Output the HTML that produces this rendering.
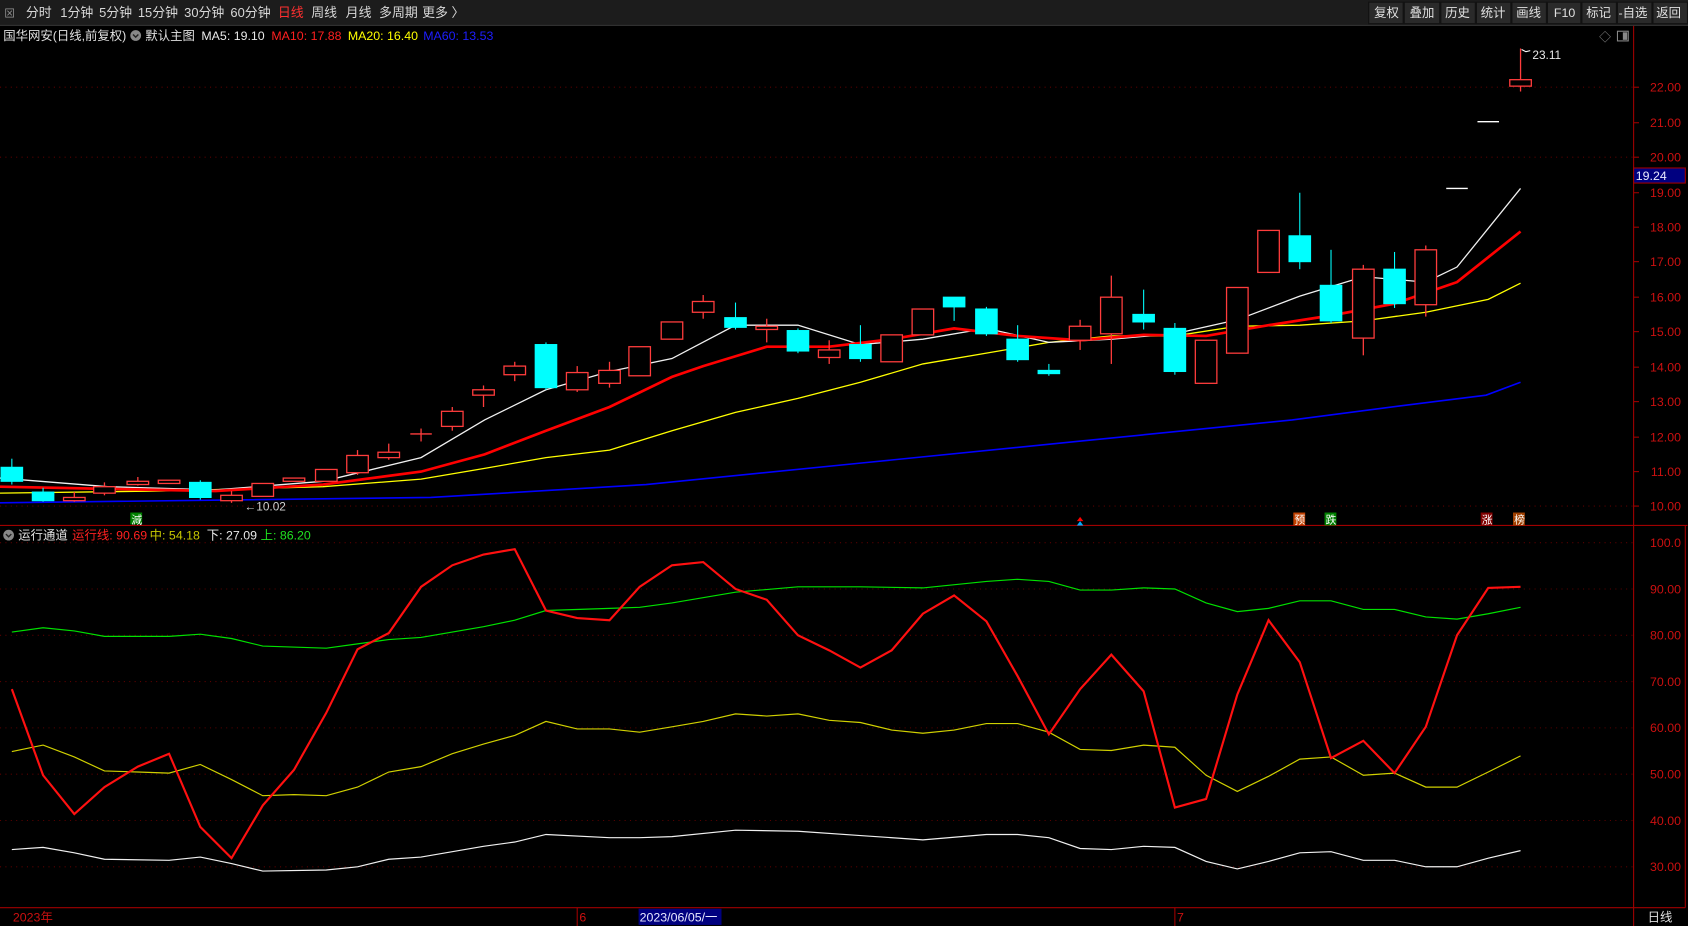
<!DOCTYPE html>
<html><head><meta charset="utf-8"><style>
html,body{margin:0;padding:0;background:#000;overflow:hidden}
svg{display:block}
text{font-family:"Liberation Sans","Noto Sans CJK SC",sans-serif}
</style></head><body>
<svg width="1688" height="926" viewBox="0 0 1567.5 860" preserveAspectRatio="none" xmlns="http://www.w3.org/2000/svg">
<rect width="1567.5" height="860" fill="#000"/>
<!-- toolbar -->
<rect x="0" y="0" width="1567.5" height="23" fill="#1c1c1c"/>
<rect x="0" y="23" width="1567.5" height="1" fill="#3a3a3a"/>
<g font-size="12" fill="#d8d8d8">
<text x="4" y="16" font-size="10" fill="#999">⊠</text>
<text x="24" y="16">分时</text><text x="56" y="16">1分钟</text><text x="92" y="16">5分钟</text><text x="128" y="16">15分钟</text><text x="171" y="16">30分钟</text><text x="214" y="16">60分钟</text>
<text x="258" y="16" fill="#ff3030">日线</text><text x="289" y="16">周线</text><text x="321" y="16">月线</text><text x="352" y="16">多周期</text><text x="392" y="16">更多 〉</text>
</g>
<g fill="#2a2a2a" stroke="#111"><rect x="1271" y="2" width="32" height="20"/><rect x="1304" y="2" width="33" height="20"/><rect x="1338" y="2" width="32" height="20"/><rect x="1371" y="2" width="32" height="20"/><rect x="1404" y="2" width="32" height="20"/><rect x="1437" y="2" width="31" height="20"/><rect x="1469" y="2" width="32" height="20"/><rect x="1502" y="2" width="32" height="20"/><rect x="1535" y="2" width="32" height="20"/></g>
<g font-size="11.5" fill="#e0e0e0"><text x="1276" y="16">复权</text><text x="1309" y="16">叠加</text><text x="1342" y="16">历史</text><text x="1375" y="16">统计</text><text x="1408" y="16">画线</text><text x="1443" y="16">F10</text><text x="1473" y="16">标记</text><text x="1503" y="16">-自选</text><text x="1538" y="16">返回</text></g>
<!-- info line -->
<g font-size="11.5"><text x="3" y="37" fill="#e0e0e0">国华网安(日线,前复权)</text>
<circle cx="126" cy="33" r="5" fill="#888"/><path d="M123.5 32l2.5 2.5 2.5-2.5" stroke="#222" fill="none" stroke-width="1.3"/>
<text x="135" y="37" fill="#e0e0e0">默认主图</text><text x="187" y="37" fill="#e8e8e8">MA5: 19.10</text><text x="252" y="37" fill="#ff2020">MA10: 17.88</text><text x="323" y="37" fill="#ffff00">MA20: 16.40</text><text x="393" y="37" fill="#1e1eff">MA60: 13.53</text></g>
<text x="1485" y="38" font-size="11" fill="#888">◇</text><rect x="1502" y="29" width="10" height="9" fill="none" stroke="#888"/><rect x="1507" y="30" width="4" height="7" fill="#888"/>
<!-- grid main -->
<g stroke="#5a0000" stroke-dasharray="1,4"><line x1="0" x2="1517" y1="81" y2="81"/><line x1="0" x2="1517" y1="146" y2="146"/><line x1="0" x2="1517" y1="470" y2="470"/>
<line x1="0" x2="1517" y1="504" y2="504"/><line x1="0" x2="1517" y1="547" y2="547"/><line x1="0" x2="1517" y1="590" y2="590"/><line x1="0" x2="1517" y1="633" y2="633"/><line x1="0" x2="1517" y1="676" y2="676"/><line x1="0" x2="1517" y1="719" y2="719"/><line x1="0" x2="1517" y1="762" y2="762"/><line x1="0" x2="1517" y1="805" y2="805"/></g>
<!-- axes -->
<g stroke="#a00000" fill="none"><line x1="1517" y1="24" x2="1517" y2="860"/><line x1="1565" y1="488" x2="1565" y2="843"/><line x1="0" y1="488" x2="1567" y2="488"/><line x1="0" y1="843" x2="1565" y2="843"/></g>
<g font-size="11.5" fill="#cc1010" text-anchor="end">
<text x="1561" y="85">22.00</text><text x="1561" y="118">21.00</text><text x="1561" y="150">20.00</text><text x="1561" y="183">19.00</text><text x="1561" y="215">18.00</text><text x="1561" y="247">17.00</text><text x="1561" y="280">16.00</text><text x="1561" y="312">15.00</text><text x="1561" y="345">14.00</text><text x="1561" y="377">13.00</text><text x="1561" y="410">12.00</text><text x="1561" y="442">11.00</text><text x="1561" y="474">10.00</text>
<text x="1561" y="508">100.0</text><text x="1561" y="551">90.00</text><text x="1561" y="594">80.00</text><text x="1561" y="637">70.00</text><text x="1561" y="680">60.00</text><text x="1561" y="723">50.00</text><text x="1561" y="766">40.00</text><text x="1561" y="809">30.00</text></g>
<g stroke="#a00000"><line x1="1517" x2="1522" y1="81" y2="81"/><line x1="1517" x2="1522" y1="114" y2="114"/><line x1="1517" x2="1522" y1="146" y2="146"/><line x1="1517" x2="1522" y1="179" y2="179"/><line x1="1517" x2="1522" y1="211" y2="211"/><line x1="1517" x2="1522" y1="243" y2="243"/><line x1="1517" x2="1522" y1="276" y2="276"/><line x1="1517" x2="1522" y1="308" y2="308"/><line x1="1517" x2="1522" y1="341" y2="341"/><line x1="1517" x2="1522" y1="373" y2="373"/><line x1="1517" x2="1522" y1="406" y2="406"/><line x1="1517" x2="1522" y1="438" y2="438"/><line x1="1517" x2="1522" y1="470" y2="470"/></g>
<rect x="1517" y="156" width="48" height="14" fill="#000080" stroke="#a00000"/><text x="1519" y="167" font-size="11.5" fill="#e8e8ff">19.24</text>
<!-- MA lines -->
<polyline fill="none" stroke="#0000ff" stroke-width="1.5" points="0,467 400,462 600,450 800,430 1000,410 1100,400 1200,390 1300,377 1380,367 1412,355"/>
<polyline fill="none" stroke="#ffff00" stroke-width="1.2" points="0,458 150,456 300,452 391,445 450,435 507,425 566,418 624,400 683,383 741,370 799,355 857,338 916,328 974,318 1032,312 1091,312 1149,303 1207,302 1266,298 1324,290 1382,278 1412,263"/>
<polyline fill="none" stroke="#f0f0f0" stroke-width="1.2" points="0,444 100,452 200,455 300,447 391,425 450,390 507,362 566,345 624,333 683,302 741,302 799,320 857,315 916,305 974,318 1032,315 1091,310 1149,297 1207,275 1266,257 1324,262 1353,248 1412,175"/>
<polyline fill="none" stroke="#ff0000" stroke-width="2.5" points="0,452 100,454 200,456 300,450 391,438 450,422 507,400 566,378 624,350 653,340 712,322 770,322 828,315 886,305 945,312 1003,316 1062,311 1120,312 1178,302 1236,293 1295,282 1353,262 1412,215"/>
<!-- candles -->
<g stroke="#ff3c3c" fill="#000" stroke-width="1.2">
<line x1="69" y1="457" x2="69" y2="466"/><rect x="59" y="462" width="20" height="3"/>
<line x1="97" y1="448" x2="97" y2="460"/><rect x="87" y="452" width="20" height="6"/>
<line x1="128" y1="443" x2="128" y2="451"/><rect x="118" y="447" width="20" height="3"/>
<rect x="147" y="446" width="20" height="3"/>
<line x1="215" y1="456" x2="215" y2="467"/><rect x="205" y="460" width="20" height="5"/>
<rect x="234" y="449" width="20" height="12"/>
<rect x="263" y="444" width="20" height="3"/>
<rect x="293" y="436" width="20" height="11"/>
<line x1="332" y1="418" x2="332" y2="441"/><rect x="322" y="423" width="20" height="16"/>
<line x1="361" y1="412" x2="361" y2="427"/><rect x="351" y="420" width="20" height="5"/>
<line x1="391" y1="398" x2="391" y2="410"/><line x1="381" y1="403" x2="401" y2="403"/>
<line x1="420" y1="378" x2="420" y2="400"/><rect x="410" y="382" width="20" height="14"/>
<line x1="449" y1="358" x2="449" y2="378"/><rect x="439" y="362" width="20" height="5"/>
<line x1="478" y1="336" x2="478" y2="354"/><rect x="468" y="340" width="20" height="8"/>
<line x1="536" y1="340" x2="536" y2="364"/><rect x="526" y="346" width="20" height="16"/>
<line x1="566" y1="336" x2="566" y2="360"/><rect x="556" y="344" width="20" height="12"/>
<rect x="584" y="322" width="20" height="27"/>
<rect x="614" y="299" width="20" height="16"/>
<line x1="653" y1="274" x2="653" y2="296"/><rect x="643" y="280" width="20" height="10"/>
<line x1="712" y1="296" x2="712" y2="318"/><rect x="702" y="303" width="20" height="3"/>
<line x1="770" y1="316" x2="770" y2="338"/><rect x="760" y="325" width="20" height="7"/>
<rect x="818" y="311" width="20" height="25"/>
<rect x="847" y="287" width="20" height="24"/>
<line x1="1003" y1="297" x2="1003" y2="325"/><rect x="993" y="303" width="20" height="13"/>
<line x1="1032" y1="256" x2="1032" y2="338"/><rect x="1022" y="276" width="20" height="34"/>
<rect x="1110" y="316" width="20" height="40"/>
<rect x="1139" y="267" width="20" height="61"/>
<rect x="1168" y="214" width="20" height="39"/>
<line x1="1266" y1="246" x2="1266" y2="330"/><rect x="1256" y="250" width="20" height="64"/>
<line x1="1324" y1="228" x2="1324" y2="294"/><rect x="1314" y="232" width="20" height="51"/>
<line x1="1343" y1="175" x2="1363" y2="175" stroke="#fff"/><line x1="1372" y1="113" x2="1392" y2="113" stroke="#fff"/>
<line x1="1412" y1="45" x2="1412" y2="85"/><rect x="1402" y="74" width="20" height="6"/>
</g>
<g fill="#00ffff" stroke="#00ffff">
<line x1="11" y1="426" x2="11" y2="450"/><rect x="1" y="434" width="20" height="13"/>
<line x1="40" y1="453" x2="40" y2="466"/><rect x="30" y="457" width="20" height="8"/>
<line x1="186" y1="446" x2="186" y2="464"/><rect x="176" y="448" width="20" height="14"/>
<line x1="507" y1="318" x2="507" y2="362"/><rect x="497" y="320" width="20" height="40"/>
<line x1="683" y1="281" x2="683" y2="306"/><rect x="673" y="295" width="20" height="9"/>
<line x1="741" y1="305" x2="741" y2="328"/><rect x="731" y="307" width="20" height="19"/>
<line x1="799" y1="302" x2="799" y2="336"/><rect x="789" y="320" width="20" height="13"/>
<line x1="886" y1="276" x2="886" y2="298"/><rect x="876" y="276" width="20" height="9"/>
<line x1="916" y1="285" x2="916" y2="312"/><rect x="906" y="287" width="20" height="23"/>
<line x1="945" y1="302" x2="945" y2="336"/><rect x="935" y="315" width="20" height="19"/>
<line x1="974" y1="338" x2="974" y2="349"/><rect x="964" y="344" width="20" height="3"/>
<line x1="1062" y1="269" x2="1062" y2="306"/><rect x="1052" y="292" width="20" height="7"/>
<line x1="1091" y1="300" x2="1091" y2="348"/><rect x="1081" y="305" width="20" height="40"/>
<line x1="1207" y1="179" x2="1207" y2="250"/><rect x="1197" y="219" width="20" height="24"/>
<line x1="1236" y1="232" x2="1236" y2="300"/><rect x="1226" y="265" width="20" height="33"/>
<line x1="1295" y1="234" x2="1295" y2="286"/><rect x="1285" y="250" width="20" height="32"/>
</g>
<text x="227" y="474" font-size="11" fill="#d0d0d0">←10.02</text>
<path d="M1413 46l4 2 4-1" stroke="#fff" fill="none"/><text x="1423" y="55" font-size="11" fill="#e8e8e8">23.11</text>
<!-- markers -->
<rect x="121" y="476" width="11" height="11" fill="#008000"/><text x="122" y="486" font-size="10" fill="#fff">減</text>
<path d="M1003 480l3 4h-6z" fill="#f00"/><path d="M1003 484l3 4h-6z" fill="#0af"/>
<rect x="1201" y="476" width="11" height="12" fill="#c04000"/><text x="1202" y="486" font-size="10" fill="#fff">预</text>
<rect x="1230" y="476" width="11" height="12" fill="#008000"/><text x="1231" y="486" font-size="10" fill="#fff">跌</text>
<rect x="1375" y="476" width="11" height="12" fill="#800000"/><text x="1376" y="486" font-size="10" fill="#fff">涨</text>
<rect x="1405" y="476" width="11" height="12" fill="#a04000"/><text x="1406" y="486" font-size="10" fill="#fff">榜</text>
<!-- indicator title -->
<circle cx="8" cy="497" r="5" fill="#888"/><path d="M5.5 496l2.5 2.5 2.5-2.5" stroke="#222" fill="none" stroke-width="1.3"/>
<g font-size="11.5"><text x="17" y="501" fill="#e0e0e0">运行通道</text><text x="67" y="501" fill="#ff2020">运行线: 90.69</text><text x="139" y="501" fill="#c8c800">中: 54.18</text><text x="192" y="501" fill="#e8e8e8">下: 27.09</text><text x="242" y="501" fill="#20e020">上: 86.20</text></g>
<!-- indicator lines -->
<polyline fill="none" stroke="#00e000" stroke-width="1.1" points="11,587 40,583 69,586 97,591 157,591 186,589 215,593 244,600 303,602 332,598 361,594 391,592 449,582 478,576 507,567 566,565 594,564 624,560 683,550 741,545 799,545 857,546 916,540 945,538 974,540 1003,548 1032,548 1062,546 1091,547 1120,560 1149,568 1178,565 1207,558 1236,558 1266,566 1295,566 1324,573 1353,575 1382,570 1412,564"/>
<polyline fill="none" stroke="#d0d000" stroke-width="1.1" points="11,698 40,692 69,703 97,716 128,717 157,718 186,710 215,724 244,739 273,738 303,739 332,731 361,717 391,712 420,700 449,691 478,683 507,670 536,677 566,677 594,680 624,675 653,670 683,663 712,665 741,663 770,669 799,671 828,678 857,681 886,678 916,672 945,672 974,680 1003,696 1032,697 1062,692 1091,694 1120,720 1149,735 1178,721 1207,705 1236,703 1266,720 1295,718 1324,731 1353,731 1382,717 1412,702"/>
<polyline fill="none" stroke="#f0f0f0" stroke-width="1.1" points="11,789 40,787 69,792 97,798 157,799 186,796 215,802 244,809 303,808 332,805 361,798 391,796 449,786 478,782 507,775 566,778 594,778 624,777 683,771 741,772 799,776 857,780 916,775 945,775 974,778 1003,788 1032,789 1062,786 1091,787 1120,800 1149,807 1178,800 1207,792 1236,791 1266,799 1295,799 1324,805 1353,805 1382,797 1412,790"/>
<polyline fill="none" stroke="#ff1010" stroke-width="2" points="11,640 40,720 69,756 97,731 128,712 157,700 186,768 215,797 244,748 273,715 303,662 332,603 361,588 391,545 420,525 449,515 478,510 507,567 536,574 566,576 594,545 624,525 653,522 683,547 712,557 741,590 770,604 799,620 828,604 857,570 886,553 916,577 945,628 974,682 1003,640 1032,608 1062,642 1091,750 1120,742 1149,645 1178,576 1207,615 1236,704 1266,688 1295,718 1324,675 1353,590 1382,546 1412,545"/>
<!-- date bar -->
<g font-size="11.5"><text x="12" y="856" fill="#cc1010">2023年</text><line x1="536" y1="843" x2="536" y2="860" stroke="#a00000"/><text x="538" y="856" fill="#cc1010">6</text>
<rect x="593" y="844" width="77" height="15" fill="#000080"/><text x="594" y="856" fill="#e8e8ff">2023/06/05/一</text>
<line x1="1091" y1="843" x2="1091" y2="860" stroke="#a00000"/><text x="1093" y="856" fill="#cc1010">7</text>
<text x="1530" y="856" fill="#e0e0e0">日线</text></g>
</svg>
</body></html>
